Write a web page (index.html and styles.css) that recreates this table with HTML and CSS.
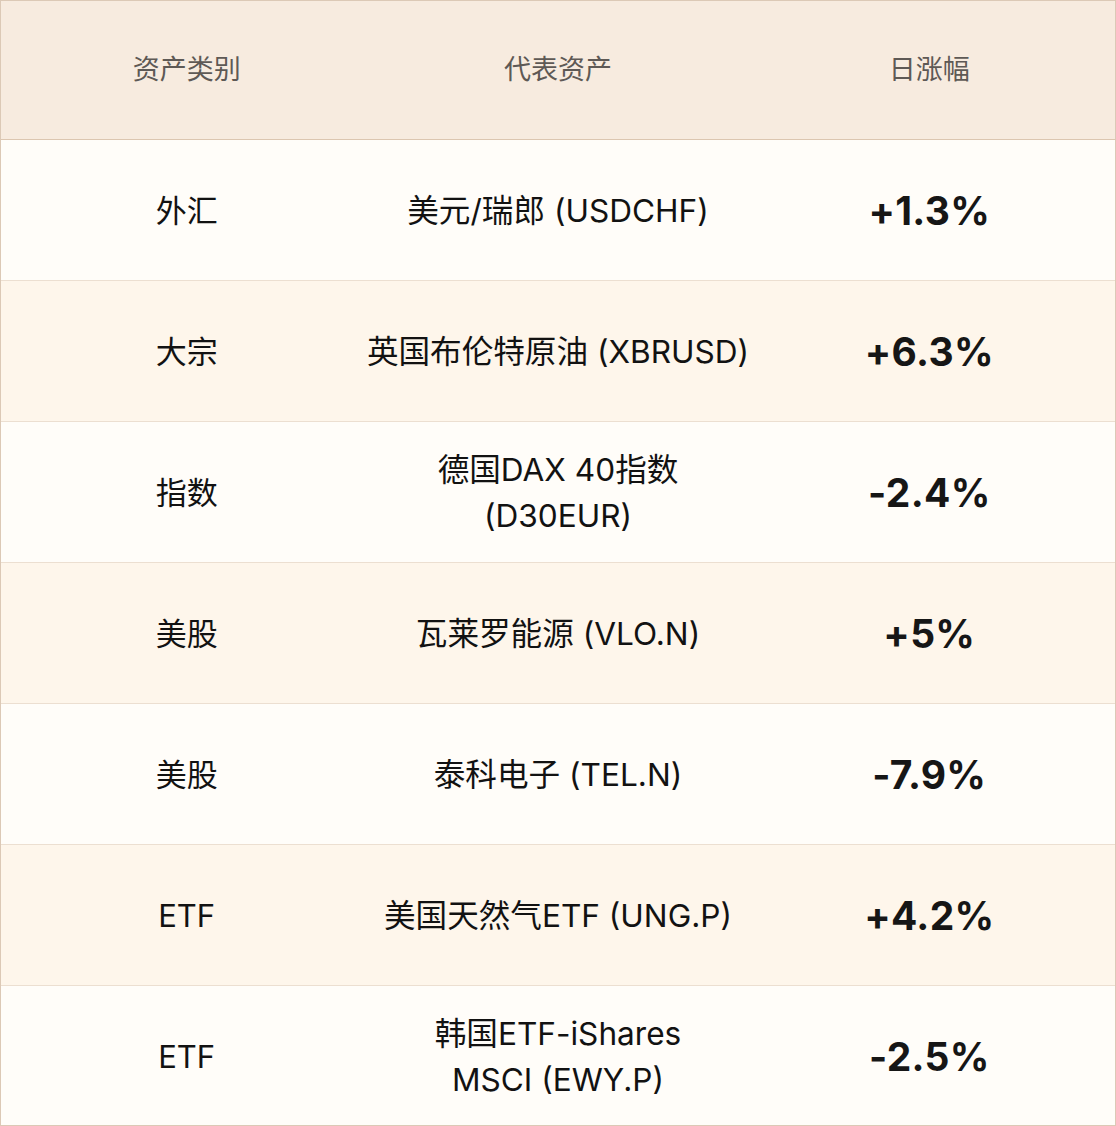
FILE: index.html
```html
<!DOCTYPE html>
<html lang="zh-CN">
<head>
<meta charset="utf-8">
<title>资产日涨幅</title>
<link rel="stylesheet" href="styles.css">
</head>
<body>
<div class="table">
  <div class="row head">
    <div class="cell">资产类别</div>
    <div class="cell">代表资产</div>
    <div class="cell">日涨幅</div>
  </div>
  <div class="row odd">
    <div class="cell">外汇</div>
    <div class="cell mid"><span class="wide">美元/瑞郎 (USDCHF)</span></div>
    <div class="cell pct">+1.3%</div>
  </div>
  <div class="row even">
    <div class="cell">大宗</div>
    <div class="cell mid"><span class="wide">英国布伦特原油 (XBRUSD)</span></div>
    <div class="cell pct">+6.3%</div>
  </div>
  <div class="row odd">
    <div class="cell">指数</div>
    <div class="cell mid"><span class="wide">德国DAX 40指数<br>(D30EUR)</span></div>
    <div class="cell pct">-2.4%</div>
  </div>
  <div class="row even">
    <div class="cell">美股</div>
    <div class="cell mid"><span class="wide">瓦莱罗能源 (VLO.N)</span></div>
    <div class="cell pct">+5%</div>
  </div>
  <div class="row odd">
    <div class="cell">美股</div>
    <div class="cell mid"><span class="wide">泰科电子 (TEL.N)</span></div>
    <div class="cell pct">-7.9%</div>
  </div>
  <div class="row even">
    <div class="cell">ETF</div>
    <div class="cell mid"><span class="wide">美国天然气ETF (UNG.P)</span></div>
    <div class="cell pct">+4.2%</div>
  </div>
  <div class="row odd last">
    <div class="cell">ETF</div>
    <div class="cell mid"><span class="wide">韩国ETF-iShares<br>MSCI (EWY.P)</span></div>
    <div class="cell pct">-2.5%</div>
  </div>
</div>
</body>
</html>
```

FILE: styles.css
```css
* { box-sizing: border-box; }
html, body {
  margin: 0;
  padding: 0;
  background: #fffdf9;
}
body {
  font-family: Inter, "Noto Sans CJK SC", "Noto Sans", sans-serif;
  color: #121212;
}
.table {
  width: 1116px;
  height: 1126px;
  border: 1px solid #dcc9b6;
  display: flex;
  flex-direction: column;
}
.row {
  display: grid;
  grid-template-columns: 1fr 1fr 1fr;
  height: 141px;
  border-bottom: 1px solid #ecdfd1;
}
.row.head {
  height: 139px;
  background: #f7ebdf;
  border-bottom: 1px solid #dcc6b0;
}
.row.odd { background: #fffdf9; }
.row.even { background: #fef6eb; }
.row.last {
  height: 139px;
  border-bottom: none;
}
.cell {
  display: flex;
  align-items: center;
  justify-content: center;
  text-align: center;
  font-size: 31px;
  line-height: 46px;
  padding-top: 2px;
}
.head .cell {
  font-size: 27px;
  color: #5e5955;
  padding-top: 0;
}
.mid {
  padding-left: 0;
  padding-right: 0;
  font-size: 31.6px;
}
.wide {
  white-space: nowrap;
  display: block;
  margin: 0 -20px;
  width: calc(100% + 40px);
}
.pct {
  font-size: 39px;
  font-weight: 700;
  letter-spacing: 0.3px;
  color: #161616;
}
```
